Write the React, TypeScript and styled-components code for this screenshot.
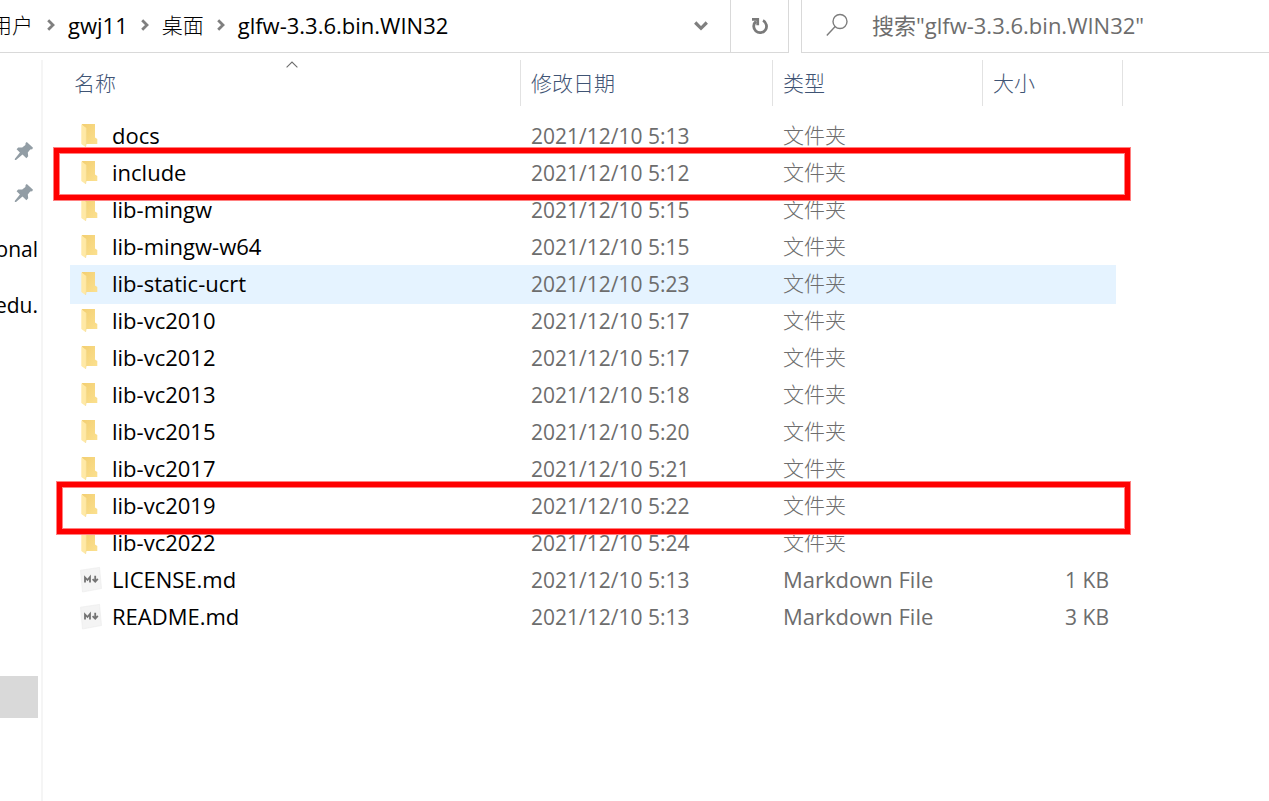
import React from "react";
import styled, { createGlobalStyle, css } from "styled-components";

const GlobalStyle = createGlobalStyle`
  * { box-sizing: border-box; }
  html, body, #root { height: 100%; }
  body {
    margin: 0;
    overflow: hidden;
    background: #fff;
    color: #000;
    font-family: "Open Sans", "Noto Sans CJK SC", sans-serif;
    font-size: 22px;
    line-height: 30px;
  }
  button, input { font: inherit; color: inherit; }
`;

const Window = styled.div`
  display: flex;
  flex-direction: column;
  height: 100%;
`;

const TopBar = styled.header`
  display: flex;
  gap: 12px;
  height: 53px;
`;

const AddressBar = styled.div`
  display: flex;
  flex: 1;
  min-width: 0;
  border-right: 1px solid #d9d9d9;
  border-bottom: 1px solid #d9d9d9;
`;

const Breadcrumbs = styled.nav`
  display: flex;
  flex: 1;
  align-items: center;
  gap: 13px;
  min-width: 0;
  padding-bottom: 2px;
  overflow: hidden;
  white-space: nowrap;
`;

const Crumb = styled.a<{ $cut?: boolean; $cjk?: boolean }>`
  color: #000;
  text-decoration: none;
  ${(p) =>
    p.$cjk &&
    css`
      font-size: 21px;
      font-weight: 300;
    `}
  ${(p) =>
    p.$cut &&
    css`
      display: flex;
      justify-content: flex-end;
      width: 34px;
      padding-right: 1px;
      overflow: hidden;
    `}
`;

const BarButton = styled.button<{ $divided?: boolean }>`
  display: flex;
  align-items: center;
  justify-content: center;
  width: 58px;
  padding: 0;
  border: 0;
  border-left: ${(p) => (p.$divided ? "1px solid #d9d9d9" : "0")};
  background: none;
`;

const SearchBox = styled.label`
  display: flex;
  flex: 0 1 468px;
  align-items: center;
  gap: 24px;
  padding: 0 0 2px 24px;
  border-left: 1px solid #d9d9d9;
  border-bottom: 1px solid #d9d9d9;
`;

const SearchInput = styled.input`
  flex: 1;
  min-width: 0;
  padding: 0;
  border: 0;
  outline: 0;
  background: none;
  &::placeholder { color: #6d6d6d; opacity: 1; }
`;

const Body = styled.div`
  display: flex;
  flex: 1;
  min-height: 0;
  padding-top: 7px;
`;

const Sidebar = styled.aside`
  display: flex;
  flex-direction: column;
  width: 43px;
  padding: 70px 3px 0 0;
  border-right: 2px solid #f5f5f5;
`;

const SideItem = styled.a<{ $gap?: number; $selected?: boolean }>`
  display: flex;
  flex: none;
  align-items: center;
  justify-content: flex-end;
  height: 42px;
  margin-top: ${(p) => p.$gap ?? 0}px;
  overflow: hidden;
  color: #000;
  background: ${(p) => (p.$selected ? "#d9d9d9" : "none")};
  font-size: 21px;
  text-decoration: none;
`;

const PinSlot = styled.span`
  display: flex;
  padding-right: 4px;
`;

const Main = styled.main`
  flex: 1;
  min-width: 0;
  padding-left: 21px;
`;

const FileTable = styled.table`
  display: block;
`;

const Head = styled.thead`
  display: block;
`;

const HeadRow = styled.tr`
  display: grid;
  grid-template-columns: 457px 252px 210px 140px;
`;

const HeadCell = styled.th`
  position: relative;
  height: 46px;
  padding: 0;
  border-right: 1px solid #e2e2e2;
  font-size: 21px;
  font-weight: 300;
`;

const SortButton = styled.button`
  width: 100%;
  height: 100%;
  padding: 0 10px;
  border: 0;
  background: none;
  color: #3f5474;
  text-align: left;
`;

const SortMark = styled.span`
  position: absolute;
  top: 1px;
  left: 50%;
  display: flex;
  transform: translateX(-50%);
`;

const Rows = styled.tbody`
  display: block;
  padding: 12px 0 0 6px;
`;

type Mark = "wide" | "narrow";

const Row = styled.tr<{ $hover?: boolean; $mark?: Mark }>`
  position: relative;
  display: grid;
  grid-template-columns: 451px 252px 210px 133px;
  width: 1046px;
  height: 37px;
  color: #6d6d6d;
  ${(p) =>
    p.$hover &&
    css`
      background: #e5f3ff;
      box-shadow: 0 -1px #e5f3ff, 0 1px #e5f3ff;
    `}
  ${(p) =>
    p.$mark &&
    css`
      z-index: 1;
      &::after {
        content: "";
        position: absolute;
        inset: ${p.$mark === "wide" ? "-7px -14px -8px -16px" : "-6px -14px -9px -13px"};
        border: 5px solid #f00;
        box-shadow: 0 0 0 1px #ff8080, inset 0 0 0 1px #ff8080;
        pointer-events: none;
      }
    `}
`;

const Cell = styled.td`
  display: flex;
  align-items: center;
  padding: 0 0 4px 10px;
  white-space: nowrap;
`;

const NameCell = styled(Cell)`
  gap: 10px;
  color: #000;
`;

const DateCell = styled(Cell)`
  padding-bottom: 2px;
  font-size: 21px;
`;

const TypeCell = styled(Cell)<{ $cjk: boolean }>`
  ${(p) =>
    p.$cjk &&
    css`
      font-size: 21px;
      font-weight: 300;
    `}
`;

const SizeCell = styled(Cell)`
  justify-content: flex-end;
  padding-right: 7px;
  padding-bottom: 2px;
  font-size: 21px;
`;

const ChevronRight = () => (
  <svg width="8" height="12" viewBox="0 0 8 12" fill="none" stroke="#7f7f7f" strokeWidth="2.8" aria-hidden>
    <path d="M1.200 1.200L6 6l-4.800 4.800" />
  </svg>
);

const ChevronDown = () => (
  <svg width="14" height="10" viewBox="0 0 14 10" fill="none" stroke="#7f7f7f" strokeWidth="3.2" aria-hidden>
    <path d="M1.200 1.500L7 7.300l5.800-5.800" />
  </svg>
);

const Refresh = () => (
  <svg width="18" height="20" viewBox="0 0 18 20" fill="none" stroke="#7a7a7a" strokeWidth="2.8" aria-hidden>
    <path d="M12 4.600A6.400 6.400 0 1 1 5 5.400" />
    <path d="M1 3.400h5.700v5.800" />
  </svg>
);

const Magnifier = () => (
  <svg width="22" height="24" viewBox="0 0 22 24" fill="none" stroke="#7d7d7d" strokeWidth="1.4" aria-hidden>
    <circle cx="14" cy="8.5" r="7" />
    <path d="M9.2 13.6L.8 22.6" />
  </svg>
);

const SortArrow = () => (
  <svg width="12" height="7" viewBox="0 0 12 7" fill="none" stroke="#6d6d6d" strokeWidth="1.1" aria-hidden>
    <path d="M.6 6.3L6 1l5.400 5.300" />
  </svg>
);

const Pin = () => (
  <svg width="20" height="20" viewBox="0 0 20 20" fill="#929da5" aria-hidden>
    <path d="M12.800 1L19 6.800l-.8 1.500-2 .3-2.400 3 .4 3.600-1.800 2-3.900-3.600L2 18.900l-1.200.1.1-1.200 5-6.200L2.600 8.200l1.600-1.800 4 .1 3.200-2.600.2-2z" />
  </svg>
);

const Folder = () => (
  <svg width="22" height="31" viewBox="0 -4 22 31" aria-hidden>
    <defs>
      <linearGradient id="folderBack" x1="0" y1="0" x2="1" y2="1">
        <stop offset="0" stopColor="#f3cf72" />
        <stop offset="1" stopColor="#fbe08f" />
      </linearGradient>
    </defs>
    <path d="M2 1h13v13.500l2.300 1.500v5H4z" fill="url(#folderBack)" />
    <path d="M1.300 1.300L6.300 5v15.500l-.8 3.500-4.200-3z" fill="#ffe9a6" />
    <path d="M6.300 5v15.500l-.8 3.500" fill="none" stroke="#f2d88d" strokeWidth=".6" />
  </svg>
);

const MarkdownFile = () => (
  <svg width="22" height="31" viewBox="0 -4 22 31" aria-hidden>
    <path d="M.5 3.200L19.500.4 21.500 21.500 2.500 25z" fill="#f4f4f4" stroke="#ebebeb" strokeWidth=".6" />
    <path d="M5 15.600V10.400l2.500 2.600L10 10v5.400" fill="none" stroke="#747474" strokeWidth="1.800" />
    <path d="M15.200 8.800v5.600M12.600 12.200l2.600 2.600 2.600-3" fill="none" stroke="#747474" strokeWidth="1.800" />
  </svg>
);

interface Entry {
  name: string;
  date: string;
  size?: string;
  hover?: boolean;
  mark?: Mark;
}

const entries: Entry[] = [
  { name: "docs", date: "5:13" },
  { name: "include", date: "5:12", mark: "wide" },
  { name: "lib-mingw", date: "5:15" },
  { name: "lib-mingw-w64", date: "5:15" },
  { name: "lib-static-ucrt", date: "5:23", hover: true },
  { name: "lib-vc2010", date: "5:17" },
  { name: "lib-vc2012", date: "5:17" },
  { name: "lib-vc2013", date: "5:18" },
  { name: "lib-vc2015", date: "5:20" },
  { name: "lib-vc2017", date: "5:21" },
  { name: "lib-vc2019", date: "5:22", mark: "narrow" },
  { name: "lib-vc2022", date: "5:24" },
  { name: "LICENSE.md", date: "5:13", size: "1 KB" },
  { name: "README.md", date: "5:13", size: "3 KB" },
];

export default function App() {
  return (
    <Window>
      <GlobalStyle />
      <TopBar>
        <AddressBar>
          <Breadcrumbs aria-label="路径">
            <Crumb href="#" $cut $cjk>用户</Crumb>
            <ChevronRight />
            <Crumb href="#">gwj11</Crumb>
            <ChevronRight />
            <Crumb href="#" $cjk>桌面</Crumb>
            <ChevronRight />
            <Crumb href="#">glfw-3.3.6.bin.WIN32</Crumb>
          </Breadcrumbs>
          <BarButton aria-label="历史记录"><ChevronDown /></BarButton>
          <BarButton aria-label="刷新" $divided><Refresh /></BarButton>
        </AddressBar>
        <SearchBox>
          <Magnifier />
          <SearchInput type="text" aria-label="搜索" placeholder={'搜索"glfw-3.3.6.bin.WIN32"'} />
        </SearchBox>
      </TopBar>
      <Body>
        <Sidebar>
          <SideItem href="#" aria-label="已固定"><PinSlot><Pin /></PinSlot></SideItem>
          <SideItem href="#" aria-label="已固定"><PinSlot><Pin /></PinSlot></SideItem>
          <SideItem href="#" $gap={14}>onal</SideItem>
          <SideItem href="#" $gap={14}>edu.</SideItem>
          <SideItem href="#" $gap={350} $selected aria-label="当前位置" />
        </Sidebar>
        <Main>
          <FileTable>
            <Head>
              <HeadRow>
                <HeadCell>
                  <SortButton>名称</SortButton>
                  <SortMark><SortArrow /></SortMark>
                </HeadCell>
                <HeadCell><SortButton>修改日期</SortButton></HeadCell>
                <HeadCell><SortButton>类型</SortButton></HeadCell>
                <HeadCell><SortButton>大小</SortButton></HeadCell>
              </HeadRow>
            </Head>
            <Rows>
              {entries.map((e) => (
                <Row key={e.name} $hover={e.hover} $mark={e.mark}>
                  <NameCell>
                    {e.size ? <MarkdownFile /> : <Folder />}
                    {e.name}
                  </NameCell>
                  <DateCell>2021/12/10 {e.date}</DateCell>
                  <TypeCell $cjk={!e.size}>{e.size ? "Markdown File" : "文件夹"}</TypeCell>
                  <SizeCell>{e.size}</SizeCell>
                </Row>
              ))}
            </Rows>
          </FileTable>
        </Main>
      </Body>
    </Window>
  );
}
